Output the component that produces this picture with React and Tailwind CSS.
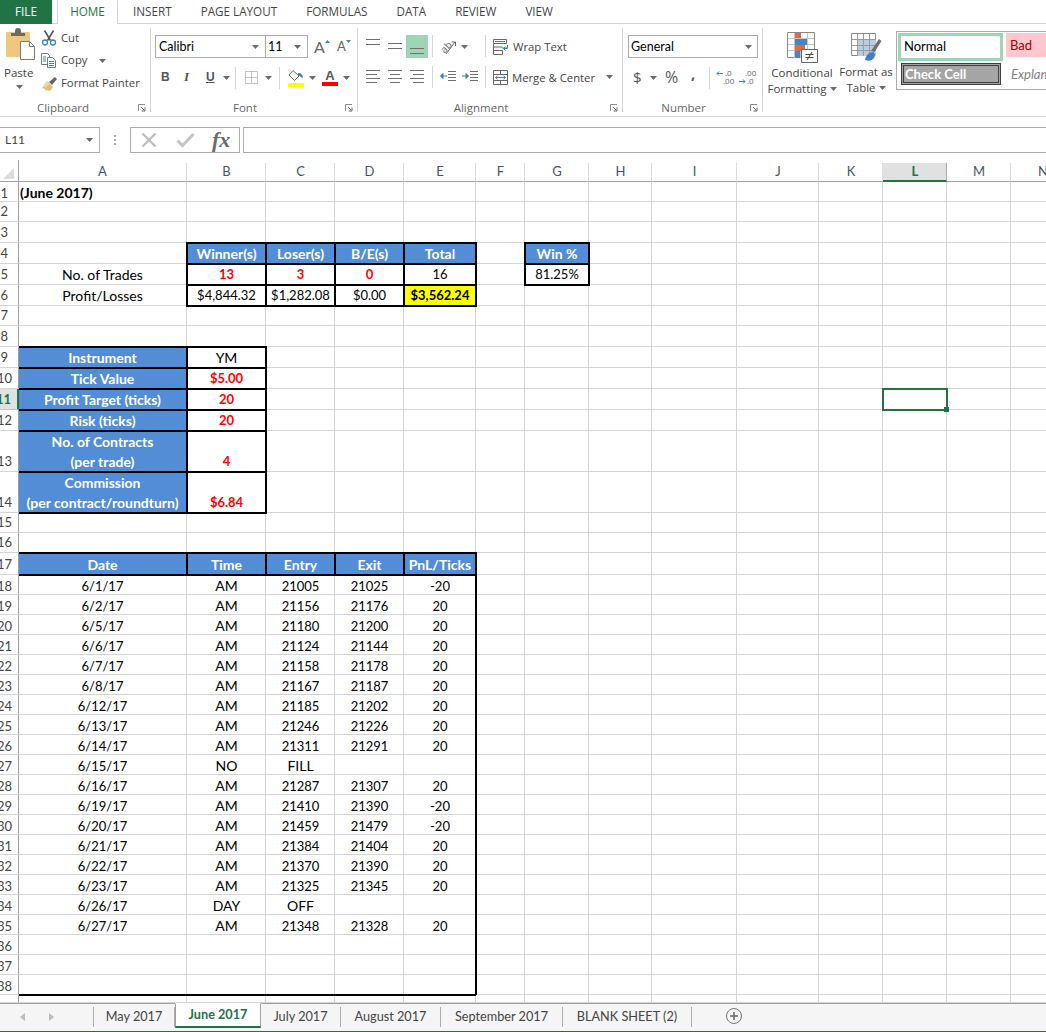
import React from 'react';

const columns = ['A', 'B', 'C', 'D', 'E', 'F', 'G', 'H', 'I', 'J', 'K', 'L', 'M', 'N'];

const trades = [
  ['6/1/17', 'AM', '21005', '21025', '-20'],
  ['6/2/17', 'AM', '21156', '21176', '20'],
  ['6/5/17', 'AM', '21180', '21200', '20'],
  ['6/6/17', 'AM', '21124', '21144', '20'],
  ['6/7/17', 'AM', '21158', '21178', '20'],
  ['6/8/17', 'AM', '21167', '21187', '20'],
  ['6/12/17', 'AM', '21185', '21202', '20'],
  ['6/13/17', 'AM', '21246', '21226', '20'],
  ['6/14/17', 'AM', '21311', '21291', '20'],
  ['6/15/17', 'NO', 'FILL', '', ''],
  ['6/16/17', 'AM', '21287', '21307', '20'],
  ['6/19/17', 'AM', '21410', '21390', '-20'],
  ['6/20/17', 'AM', '21459', '21479', '-20'],
  ['6/21/17', 'AM', '21384', '21404', '20'],
  ['6/22/17', 'AM', '21370', '21390', '20'],
  ['6/23/17', 'AM', '21325', '21345', '20'],
  ['6/26/17', 'DAY', 'OFF', '', ''],
  ['6/27/17', 'AM', '21348', '21328', '20'],
];

const hdr = (t) => ({ t, kind: 'hdr' });
const box = (t) => ({ t, kind: 'box' });
const red = (t) => ({ t, kind: 'red' });

const sheet = {
  1: { A: { t: '(June 2017)', kind: 'title' } },
  4: { B: hdr('Winner(s)'), C: hdr('Loser(s)'), D: hdr('B/E(s)'), E: hdr('Total'), G: hdr('Win %') },
  5: { A: { t: 'No. of Trades' }, B: red('13'), C: red('3'), D: red('0'), E: box('16'), G: box('81.25%') },
  6: { A: { t: 'Profit/Losses' }, B: box('$4,844.32'), C: box('$1,282.08'), D: box('$0.00'), E: { t: '$3,562.24', kind: 'total' } },
  9: { A: hdr('Instrument'), B: box('YM') },
  10: { A: hdr('Tick Value'), B: red('$5.00') },
  11: { A: hdr('Profit Target (ticks)'), B: red('20'), L: { kind: 'selected' } },
  12: { A: hdr('Risk (ticks)'), B: red('20') },
  13: { A: hdr(['No. of Contracts', '(per trade)']), B: red('4') },
  14: { A: hdr(['Commission', '(per contract/roundturn)']), B: red('$6.84') },
  17: { A: hdr('Date'), B: hdr('Time'), C: hdr('Entry'), D: hdr('Exit'), E: hdr('PnL/Ticks') },
};
trades.forEach((row, i) => {
  sheet[18 + i] = { A: { t: row[0] }, B: { t: row[1] }, C: { t: row[2] }, D: { t: row[3] }, E: { t: row[4] } };
});

const rowNumbers = Array.from({ length: 39 }, (_, i) => i + 1);

const Caret = ({ className = '' }) => (
  <svg width="7" height="4" viewBox="0 0 7 4" className={`shrink-0 ${className}`}>
    <path d="M0 0h7L3.500 4z" fill="#6a6a6a" />
  </svg>
);

const Launcher = () => (
  <svg width="8" height="8" viewBox="0 0 8 8" className="shrink-0">
    <path d="M0.500 7V0.500H7" fill="none" stroke="#888" />
    <path d="M3 3l3.500 3.500M7 3.500V7H3.500" fill="none" stroke="#666" />
  </svg>
);

const Sep = ({ className = '' }) => <div className={`w-px shrink-0 bg-[#d6d6d6] ${className}`} />;

const Lines = ({ rows }) => (
  <svg width="16" height="24" viewBox="0 0 16 24">
    {rows.map(([a, b, y]) => (
      <path key={y} d={`M${a} ${y}.5H${b}`} stroke="#6f6f6f" fill="none" />
    ))}
  </svg>
);

const Group = ({ label, width, labelPad = 'pr-[6px]', children }) => (
  <div className={`h-[84px] flex flex-col border-r border-[#d6d6d6] shrink-0 ${width}`}>
    <div className="h-[72px] shrink-0">{children}</div>
    <div className="h-[16px] shrink-0 flex items-center text-[11.5px] text-[#666] leading-none">
      <div className={`flex-1 text-center ${labelPad}`}>{label}</div>
      <div className="pr-[4px] flex"><Launcher /></div>
    </div>
  </div>
);

const PasteIcon = () => (
  <svg width="34" height="32" viewBox="0 0 34 32">
    <rect x="2" y="4" width="24" height="25" rx="1" fill="#edc87e" />
    <path d="M7 8V5h4V3a3 3 0 0 1 6 0v2h4v3z" fill="#6b6b6b" />
    <path d="M16.500 13.500h9l5 5v13h-14z" fill="#fff" stroke="#7a7a7a" />
    <path d="M25.500 13.500v5h5" fill="none" stroke="#7a7a7a" />
  </svg>
);

const ScissorsIcon = () => (
  <svg width="16" height="16" viewBox="0 0 16 16">
    <path d="M3.500 0.500l6 10M12.500 0.500l-6 10" stroke="#555" strokeWidth="1.600" fill="none" />
    <circle cx="4" cy="12.500" r="2.500" fill="none" stroke="#3f7fc1" strokeWidth="1.300" />
    <circle cx="12" cy="12.500" r="2.500" fill="none" stroke="#3f7fc1" strokeWidth="1.300" />
  </svg>
);

const CopyIcon = () => (
  <svg width="16" height="15" viewBox="0 0 16 15">
    <path d="M0.500 0.500h6l2 2v9h-8z" fill="#fff" stroke="#777" />
    <path d="M6.500 4.500h5l3 3v7h-8z" fill="#fff" stroke="#777" />
    <path d="M2 4h3M2 6h3M2 8h3M8 8.500h5M8 10.500h5M8 12.500h5" stroke="#3f7fc1" />
  </svg>
);

const PainterIcon = () => (
  <svg width="17" height="16" viewBox="0 0 17 16">
    <path d="M8 6l6-5 2 2-5 6z" fill="#666" />
    <path d="M6 5l6 6-3 4-3-1-1 1-1-2-3-1z" fill="#e3bd78" />
    <path d="M6 5l2.500 2.500-4 4-2.500-1z" fill="#efd7a6" />
  </svg>
);

const FillIcon = () => (
  <svg width="16" height="18" viewBox="0 0 16 18">
    <path d="M5 1.500l6 5.500-4.500 4.500-5.500-5.500z" fill="#fff" stroke="#666" />
    <path d="M10 4c3 0 5 2 5 5-1.500-.5-3-2-5-3z" fill="#3f7fc1" />
    <rect x="0" y="14" width="16" height="4" fill="#ffff00" />
  </svg>
);

const BorderIcon = () => (
  <svg width="13" height="13" viewBox="0 0 13 13">
    <path d="M0.500 0.500h12v12h-12zM6.500 0.500v12M0.500 6.500h12" fill="none" stroke="#8a8a8a" strokeDasharray="1 1" />
  </svg>
);

const OrientationIcon = () => (
  <svg width="18" height="18" viewBox="0 0 18 18">
    <text x="1" y="13" fontSize="10" fill="#666" transform="rotate(-45 6 10)" fontFamily="Open Sans, sans-serif">ab</text>
    <path d="M6 16L15 4M11.500 4H15.500V8" fill="none" stroke="#666" />
  </svg>
);

const IndentIcon = ({ flip }) => (
  <svg width="16" height="12" viewBox="0 0 16 12">
    <path d="M8 .5h8M8 3.500h8M8 6.500h8M8 9.500h8" stroke="#6f6f6f" fill="none" />
    {flip ? (
      <path d="M0 5h5M4 2.500L6.500 5 4 7.500z" stroke="#3f7fc1" fill="#3f7fc1" />
    ) : (
      <path d="M2 5h5M3 2.500L.5 5 3 7.500z" stroke="#3f7fc1" fill="#3f7fc1" />
    )}
  </svg>
);

const WrapIcon = () => (
  <svg width="16" height="16" viewBox="0 0 16 16">
    <path d="M.5.500h13v4h-13zM.5 4.500v11h9v-4h-9M.5 8h9" fill="none" stroke="#666" />
    <path d="M2 2.500h10" stroke="#3f7fc1" />
    <path d="M9 9h5.500v-3M14.500 9.500H11M12.500 7.500L10.500 9.500l2 2" fill="none" stroke="#3f7fc1" />
  </svg>
);

const MergeIcon = () => (
  <svg width="15" height="15" viewBox="0 0 15 15">
    <path d="M.5.500h14v14H.5zM.5 4.500h14M.5 10.500h14M7.500.500v4M7.500 10.500v4" fill="none" stroke="#666" />
    <path d="M2.500 7.500h10M4.500 5.800L2.500 7.500l2 1.700M10.500 5.800l2 1.700-2 1.700" fill="none" stroke="#3f7fc1" />
  </svg>
);

const DecimalIcon = ({ more }) => (
  <svg width="21" height="17" viewBox="0 0 21 17">
    <text x={more ? 7 : 9} y="7" fontSize="8" fill="#666" fontFamily="Open Sans, sans-serif">{more ? '.00' : '.0'}</text>
    <text x={more ? 9 : 7} y="15" fontSize="8" fill="#666" fontFamily="Open Sans, sans-serif">{more ? '.0' : '.00'}</text>
    {more ? (
      <path d="M1 12.500h6M5 10.500l2 2-2 2" fill="none" stroke="#3f7fc1" />
    ) : (
      <path d="M1 4.500h6M3 2.500l-2 2 2 2" fill="none" stroke="#3f7fc1" />
    )}
  </svg>
);

const CondFormatIcon = () => (
  <svg width="31" height="31" viewBox="0 0 31 31">
    <path d="M.5.500h27v25H.5z" fill="#fff" stroke="#8a8a8a" />
    <path d="M7.500 1v25M13.500 1v25M20.500 1v25M1 6.500h26M1 12.500h26M1 18.500h26" stroke="#c4c4c4" />
    <rect x="8" y="1" width="6" height="5" fill="#e0673f" />
    <rect x="8" y="7" width="12" height="6" fill="#4a80bf" />
    <rect x="8" y="13" width="10" height="6" fill="#e0673f" />
    <rect x="8" y="19" width="5" height="7" fill="#4a80bf" />
    <path d="M14.500 17.500h16v13h-16z" fill="#fff" stroke="#666" />
    <path d="M18.500 22.500h8M18.500 25.500h8M25 20l-5 8" stroke="#444" fill="none" />
  </svg>
);

const TableIcon = () => (
  <svg width="31" height="29" viewBox="0 0 31 29">
    <path d="M.5.500h24v22H.5z" fill="#fff" stroke="#8a8a8a" />
    <rect x="7" y="6" width="18" height="17" fill="#b9cce4" />
    <path d="M6.500 1v22M12.500 1v22M18.500 1v22M1 6.500h24M1 12.500h24M1 17.500h24" stroke="#9a9a9a" />
    <path d="M20 18L28 6l2.500 2-7 11z" fill="#6e6e6e" />
    <path d="M14 27c1-5 4-8 8-8 3 1 2 5 0 7-2 2-5 2-8 1z" fill="#3f7fc1" />
  </svg>
);

const XIcon = () => (
  <svg width="16" height="16" viewBox="0 0 16 16">
    <path d="M1.500 1.500l13 13M14.500 1.500l-13 13" stroke="#bdbdbd" strokeWidth="2.200" fill="none" />
  </svg>
);

const CheckIcon = () => (
  <svg width="19" height="16" viewBox="0 0 19 16">
    <path d="M1.500 8.500l5 5L17.500 2" stroke="#c4c4c4" strokeWidth="3" fill="none" />
  </svg>
);

const Ribbon = () => (
  <div className="h-[93px] border-b border-[#d4d4d4] flex pt-[4px] text-[#444] [font-family:'Open_Sans',sans-serif] overflow-hidden">
    {/* Clipboard */}
    <Group label="Clipboard" width="w-[151px]" labelPad="pr-[12px]">
      <div className="flex -mt-[2px]">
        <div className="w-[41px] pl-[4px] pt-[2px] flex flex-col items-start">
          <PasteIcon />
          <div className="text-[11.5px] leading-[14px] mt-[6px]">Paste</div>
          <Caret className="ml-[12px] mt-[5px]" />
        </div>
        <div className="flex flex-col text-[11.3px]">
          <div className="h-[23px] flex items-center gap-[4px] pt-[1px]"><ScissorsIcon /><span>Cut</span></div>
          <div className="h-[23px] flex items-center gap-[4px]"><CopyIcon /><span>Copy</span><Caret className="ml-[8px]" /></div>
          <div className="h-[23px] flex items-center gap-[3px]"><PainterIcon /><span>Format Painter</span></div>
        </div>
      </div>
    </Group>

    {/* Font */}
    <Group label="Font" width="w-[207px]">
      <div className="flex items-center pl-[4px] pt-[7px] [font-family:Lato,sans-serif] text-[12.5px] text-black">
        <div className="w-[111px] h-[23px] border border-[#ababab] flex items-center justify-between pl-[3px] pr-[6px]">
          <span className="pt-[1px]">Calibri</span><Caret />
        </div>
        <div className="w-[43px] h-[23px] -ml-px border border-[#ababab] flex items-center justify-between pl-[2px] pr-[6px]">
          <span className="pt-[1px]">11</span><Caret />
        </div>
        <div className="ml-[6px] w-[20px] flex items-start text-[#666] text-[16px] leading-none">A<svg width="5" height="3" viewBox="0 0 5 3" className="mt-[1px]"><path d="M0 3h5L2.500 0z" fill="#3f7fc1" /></svg></div>
        <div className="ml-[3px] flex items-start text-[#666] text-[13px] leading-none">A<svg width="5" height="3" viewBox="0 0 5 3"><path d="M0 0h5L2.500 3z" fill="#3f7fc1" /></svg></div>
      </div>
      <div className="flex items-center pt-[7px] h-[32px] [font-family:'Liberation_Sans',sans-serif] text-[13px] text-[#555]">
        <b className="w-[22px] ml-[10px] text-[12px] -mt-[2px]">B</b>
        <i className="w-[22px] ml-[1px] [font-family:'Liberation_Serif',serif] font-bold -mt-[2px]">I</i>
        <b className="w-[15px] underline text-[12px] -mt-[2px]">U</b>
        <Caret className="ml-[2px]" />
        <Sep className="h-[22px] ml-[5px]" />
        <div className="ml-[9px]"><BorderIcon /></div>
        <Caret className="ml-[7px]" />
        <Sep className="h-[22px] ml-[7px]" />
        <div className="ml-[8px]"><FillIcon /></div>
        <Caret className="ml-[5px]" />
        <div className="ml-[6px] w-[16px] flex flex-col items-center leading-none">
          <b className="text-[13px] leading-[13px]">A</b>
          <div className="w-[16px] h-[4px] bg-[#ff0000]" />
        </div>
        <Caret className="ml-[5px]" />
      </div>
    </Group>

    {/* Alignment */}
    <Group label="Alignment" width="w-[265px]">
      <div className="flex pt-[7px] h-[30px] pl-[7px]">
        <div className="w-[22px] h-[23px]"><Lines rows={[[1, 15, 4], [1, 15, 9]]} /></div>
        <div className="w-[22px] h-[23px]"><Lines rows={[[1, 15, 8], [1, 15, 13]]} /></div>
        <div className="w-[22px] h-[23px] bg-[#9fd5b7] ml-[-3px] mr-[4px] pl-[3px] pt-[2px] overflow-hidden"><Lines rows={[[1, 15, 11], [1, 15, 16]]} /></div>
        <Sep className="h-[22px]" />
        <div className="w-[52px] pl-[7px] flex items-center gap-[3px] h-[23px]"><OrientationIcon /><Caret /></div>
        <Sep className="h-[22px]" />
        <div className="pl-[7px] flex items-center gap-[4px] h-[23px] text-[11.3px]"><WrapIcon /><span className="pt-[2px]">Wrap Text</span></div>
      </div>
      <div className="flex pt-[7px] pl-[7px] items-center">
        <div className="w-[22px] h-[24px]"><Lines rows={[[1, 15, 5], [1, 12, 9], [1, 15, 13], [1, 12, 17]]} /></div>
        <div className="w-[22px] h-[24px]"><Lines rows={[[1, 15, 5], [3, 13, 9], [1, 15, 13], [3, 13, 17]]} /></div>
        <div className="w-[22px] h-[24px]"><Lines rows={[[1, 15, 5], [4, 15, 9], [1, 15, 13], [4, 15, 17]]} /></div>
        <Sep className="h-[22px] ml-[1px]" />
        <div className="w-[52px] pl-[7px] flex gap-[6px]"><IndentIcon /><IndentIcon flip /></div>
        <Sep className="h-[22px]" />
        <div className="pl-[7px] flex items-center gap-[4px] text-[11.3px]"><MergeIcon /><span className="pt-[2px]">Merge &amp; Center</span><Caret className="ml-[7px]" /></div>
      </div>
    </Group>

    {/* Number */}
    <Group label="Number" width="w-[140px]">
      <div className="pt-[7px] pl-[5px] [font-family:Lato,sans-serif] text-[12.5px] text-black">
        <div className="w-[130px] h-[23px] border border-[#ababab] flex items-center justify-between pl-[2px] pr-[5px]">
          <span className="pt-[1px]">General</span><Caret />
        </div>
      </div>
      <div className="flex items-center pt-[7px] pl-[10px] text-[#555]">
        <span className="w-[10px] text-[15px] leading-[25px]">$</span>
        <Caret className="ml-[7px]" />
        <span className="w-[17px] text-[16px] ml-[8px] leading-[25px]">%</span>
        <b className="w-[6px] text-[15px] ml-[9px] leading-[25px] -translate-y-[4px]">,</b>
        <Sep className="h-[22px] ml-[12px]" />
        <div className="ml-[6px]"><DecimalIcon /></div>
        <div className="ml-[1px]"><DecimalIcon more /></div>
      </div>
    </Group>

    {/* Styles */}
    <div className="flex h-[84px] text-[11.5px] leading-[16px] text-center">
      <div className="w-[78px] shrink-0 flex flex-col items-center pt-[4px]">
        <CondFormatIcon />
        <div className="mt-[2px]">Conditional</div>
        <div className="flex items-center gap-[3px]">Formatting<Caret /></div>
      </div>
      <div className="w-[58px] shrink-0 ml-[-4px] flex flex-col items-center pt-[5px]">
        <TableIcon />
        <div className="mt-[2px]">Format as</div>
        <div className="flex items-center gap-[3px]">Table<Caret /></div>
      </div>
      <div className="ml-[1px] mt-[3px] w-[160px] shrink-0 h-[59px] border border-[#ababab] pl-[1px] pt-[1px] [font-family:Lato,sans-serif] text-[13px] text-left overflow-hidden">
        <div className="flex">
          <div className="w-[105px] shrink-0 h-[28px] border-[3px] border-[#9fd5b7] flex items-center pl-[3px] pb-[3px] text-black">Normal</div>
          <div className="w-[60px] shrink-0 h-[24px] ml-[3px] bg-[#ffc7ce] text-[#9c0006] flex items-center pl-[4px]">Bad</div>
        </div>
        <div className="flex mt-[2px] items-center">
          <div className="w-[100px] shrink-0 h-[22px] ml-[3px] bg-[#a5a5a5] border-[3px] border-double border-[#3f3f3f] text-white font-bold flex items-center pl-[1px] pb-[1px]">Check Cell</div>
          <i className="ml-[10px] shrink-0 text-[#7f7f7f]">Explanatory</i>
        </div>
      </div>
    </div>
  </div>
);

const FormulaBar = () => (
  <div className="h-[26px] shrink-0 mt-[10px] flex [font-family:Lato,sans-serif]">
    <div className="w-[100px] border border-l-0 border-[#ababab] flex items-center justify-between pl-[5px] pr-[6px] text-[12px] text-[#444]">
      <span>L11</span><Caret />
    </div>
    <div className="w-[30px] flex flex-col items-center justify-center gap-[2px]">
      <div className="w-[2px] h-[2px] bg-[#aaa]" />
      <div className="w-[2px] h-[2px] bg-[#aaa]" />
      <div className="w-[2px] h-[2px] bg-[#aaa]" />
    </div>
    <div className="w-[110px] border border-[#ababab] flex items-center pl-[10px]">
      <XIcon />
      <div className="ml-[19px]"><CheckIcon /></div>
      <span className="ml-[17px] [font-family:'Liberation_Serif',serif] italic font-bold text-[22px] leading-none text-[#6a6a6a]">fx</span>
    </div>
    <div className="flex-1 ml-[3px] border border-r-0 border-[#ababab]" />
  </div>
);

const Cell = ({ col, row, cell }) => {
  const kind = cell?.kind;
  const lines = cell?.t ? (Array.isArray(cell.t) ? cell.t : [cell.t]) : [];
  const numeric = lines.length === 1 && /^[-$\d,./%]+$/.test(lines[0]);
  const inData = row >= 18 && row <= 38;
  const lineHeight = row === 1 || row >= 18 ? 'leading-[16px]' : 'leading-[19px]';
  let cls = `border-r border-b border-[#d4d4d4] flex flex-col justify-end text-center ${numeric ? 'text-[13px]' : 'text-[14px]'}`;
  if (kind === 'title') cls += ' items-start pl-[2px] font-bold text-black';
  else cls += ' items-center pl-[1px]';
  if (kind === 'hdr') cls += ' relative z-10 outline-2 -outline-offset-1 outline-black bg-[#538dd5] text-white font-bold gap-px';
  else if (kind === 'red') cls += ' relative z-10 outline-2 -outline-offset-1 outline-black text-[#ff0000] font-bold';
  else if (kind === 'box') cls += ' relative z-10 outline-2 -outline-offset-1 outline-black text-black';
  else if (kind === 'total') cls += ' relative z-10 outline-2 -outline-offset-1 outline-black bg-[#ffff00] font-bold text-black';
  else if (kind === 'selected') cls += " relative z-20 outline-2 -outline-offset-1 outline-[#217346] after:content-[''] after:absolute after:-right-[3px] after:-bottom-[3px] after:w-[5px] after:h-[5px] after:bg-[#217346]";
  else cls += ' text-black';
  if (inData && 'ABCDE'.includes(col)) {
    cls += ' relative';
    if (col === 'E') cls += " z-10 after:content-[''] after:absolute after:-top-px after:-bottom-px after:-right-[2px] after:w-[2px] after:bg-black";
    if (row === 38) cls += " z-10 before:content-[''] before:absolute before:left-0 before:-right-px before:-bottom-[2px] before:h-[2px] before:bg-black";
  }
  return (
    <div className={cls}>
      {lines.map((l) => (
        <div key={l} className={`${lineHeight} whitespace-nowrap`}>{l}</div>
      ))}
    </div>
  );
};

const Sheet = () => (
  <div className="flex-1 mt-[7px] overflow-hidden [font-family:Lato,sans-serif] min-h-0">
    <div className="grid w-[1075px] grid-cols-[18px_169px_79px_69px_69px_72px_49px_64px_63px_85px_82px_64px_64px_64px_64px] grid-rows-[22px_20px_20px_21px_21px_21px_21px_20px_21px_21px_21px_21px_21px_41px_41px_20px_20px_22px_20px_20px_20px_20px_20px_20px_20px_20px_20px_20px_20px_20px_20px_20px_20px_20px_20px_20px_20px_20px_20px_8px]">
      {/* column headers */}
      <div className="relative z-20 -mr-px bg-white border-r border-b border-[#9f9f9f] flex items-end justify-center pb-[2px]">
        <svg width="11" height="11" viewBox="0 0 11 11" className="-ml-[2px]"><path d="M11 0v11H0z" fill="#dcdcdc" /></svg>
      </div>
      {columns.map((c) => (
        <div
          key={c}
          className={c === 'L'
            ? 'mt-[3px] pl-[1px] bg-[#e1e1e1] border-r border-b-2 border-r-[#ababab] border-b-[#217346] flex items-center justify-center text-[13px] font-bold text-[#217346]'
            : 'mt-[3px] pl-[1px] border-r border-b border-r-[#dcdcdc] border-b-[#9f9f9f] flex items-center justify-center text-[13px] text-[#44546a]'}
        >
          {c}
        </div>
      ))}
      {/* body */}
      {rowNumbers.map((n) => (
        <React.Fragment key={n}>
          <div
            className={n === 11
              ? 'relative z-20 -mr-px bg-[#e1e1e1] border-r-2 border-r-[#217346] border-b border-b-[#c6c6c6] flex items-end justify-end pr-[6px] text-[13px] leading-[19px] font-bold text-[#217346] overflow-hidden'
              : `relative z-20 -mr-px bg-white border-r border-b border-r-[#9f9f9f] border-b-[#d4d4d4] flex items-end justify-end ${n < 10 ? 'pr-[10px]' : 'pr-[6px]'} text-[13px] ${n === 1 || n >= 18 ? 'leading-[16px]' : 'leading-[19px]'} text-[#444] overflow-hidden`}
          >
            {n === 39 ? '' : n}
          </div>
          {columns.map((c) => (
            <Cell key={c} col={c} row={n} cell={sheet[n]?.[c]} />
          ))}
        </React.Fragment>
      ))}
    </div>
  </div>
);

const SheetTab = ({ width, active, children }) => (
  <div
    className={active
      ? `${width} h-[25px] -mt-px bg-white border-x border-t border-b-2 border-[#9f9f9f] border-b-[#217346] border-t-white flex items-center justify-center font-bold text-[#217346]`
      : `${width} h-[20px] mt-[3px] border-r border-[#ababab] flex items-center justify-center text-[#444]`}
  >
    {children}
  </div>
);

const TabBar = () => (
  <div className="h-[29px] shrink-0 bg-[#f5f5f5] border-t border-[#9f9f9f] border-b border-b-[#217346] flex [font-family:Lato,sans-serif] text-[12.7px]">
    <div className="w-[94px] h-[20px] mt-[3px] border-r border-[#ababab] flex items-center pl-[20px] gap-[24px]">
      <svg width="5" height="8" viewBox="0 0 5 8"><path d="M5 0v8L0 4z" fill="#bcbcbc" /></svg>
      <svg width="5" height="8" viewBox="0 0 5 8"><path d="M0 0v8l5-4z" fill="#bcbcbc" /></svg>
    </div>
    <SheetTab width="w-[81px]">May 2017</SheetTab>
    <SheetTab width="w-[86px]" active>June 2017</SheetTab>
    <SheetTab width="w-[80px]">July 2017</SheetTab>
    <SheetTab width="w-[100px]">August 2017</SheetTab>
    <SheetTab width="w-[122px]">September 2017</SheetTab>
    <SheetTab width="w-[129px]">BLANK SHEET (2)</SheetTab>
    <div className="ml-[34px] mt-[4px] w-[16px] h-[16px] rounded-full border border-[#777] flex items-center justify-center">
      <svg width="8" height="8" viewBox="0 0 8 8"><path d="M4 0v8M0 4h8" stroke="#666" strokeWidth="1.500" /></svg>
    </div>
  </div>
);

const TopTabs = () => (
  <div className="h-[24px] shrink-0 flex border-b border-[#d4d4d4] text-[11.7px] text-[#444] [font-family:'Open_Sans',sans-serif]">
    <div className="w-[52px] h-[24px] bg-[#217346] text-white flex items-center justify-center">FILE</div>
    <div className="w-[61px] h-[24px] ml-[5px] bg-white border-x border-[#d4d4d4] flex items-center justify-center text-[#217346]">HOME</div>
    <div className="ml-[15px] flex items-center">INSERT</div>
    <div className="ml-[29px] flex items-center">PAGE LAYOUT</div>
    <div className="ml-[29px] flex items-center">FORMULAS</div>
    <div className="ml-[29px] flex items-center">DATA</div>
    <div className="ml-[29px] flex items-center">REVIEW</div>
    <div className="ml-[29px] flex items-center">VIEW</div>
  </div>
);

export default function App() {
  return (
    <div className="w-[1046px] h-[1032px] bg-white flex flex-col overflow-hidden">
      <TopTabs />
      <Ribbon />
      <FormulaBar />
      <Sheet />
      <TabBar />
    </div>
  );
}
